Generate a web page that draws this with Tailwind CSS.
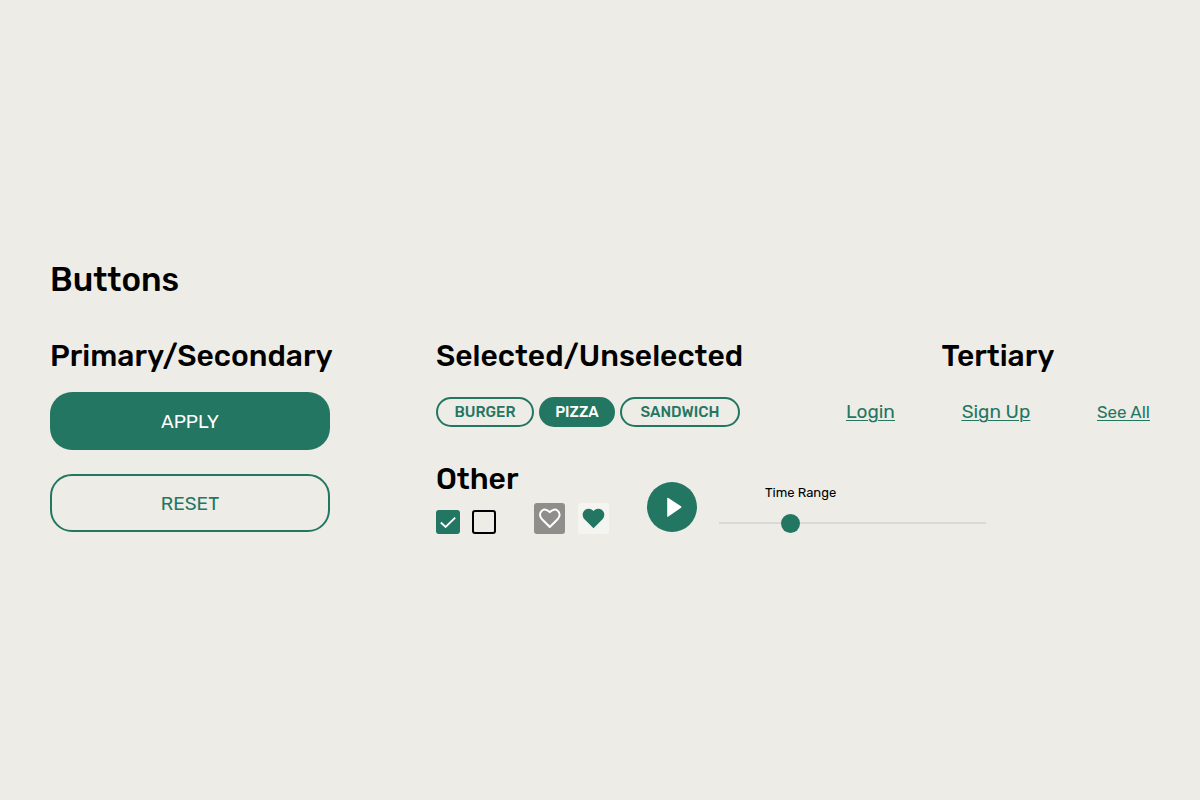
<!DOCTYPE html>
<html lang="en">
<head>
<meta charset="utf-8">
<meta name="viewport" content="width=device-width, initial-scale=1">
<title>Buttons</title>
<script src="https://cdn.jsdelivr.net/npm/@tailwindcss/browser@4"></script>
</head>
<body class="bg-[#edece6] font-[Rubik,Roboto,sans-serif] text-black">
<main class="flex min-h-screen flex-col justify-center px-[50px] pb-2">
  <h1 class="pt-0.5 text-[33px] leading-10 font-medium">Buttons</h1>
  <div class="mt-9 grid grid-cols-[280px_304px_304px] justify-between">
    <section class="row-span-2">
      <h2 class="text-[30px] leading-10 font-medium whitespace-nowrap">Primary/Secondary</h2>
      <div class="mt-4 flex flex-col gap-6">
        <button type="button" class="h-[58px] rounded-[22px] bg-[#237662] pt-0.5 text-[19px] text-white">APPLY</button>
        <button type="button" class="h-[58px] rounded-[22px] border-2 border-[#237662] pt-0.5 text-[19px] text-[#237662]">RESET</button>
      </div>
    </section>
    <section>
      <h2 class="text-[30px] leading-10 font-medium whitespace-nowrap">Selected/Unselected</h2>
      <div class="mt-[21px] flex gap-[5px] text-[15px] font-medium">
        <button type="button" aria-pressed="false" class="h-[30px] w-[98px] rounded-full border-2 border-[#237662] text-[#237662]">BURGER</button>
        <button type="button" aria-pressed="true" class="h-[30px] w-[76px] rounded-full bg-[#237662] text-white">PIZZA</button>
        <button type="button" aria-pressed="false" class="h-[30px] w-[120px] rounded-full border-2 border-[#237662] text-[#237662]">SANDWICH</button>
      </div>
    </section>
    <section>
      <h2 class="text-center text-[30px] leading-10 font-medium">Tertiary</h2>
      <div class="mt-6 flex items-baseline justify-between text-[19px] leading-6 text-[#237662] underline decoration-1 underline-offset-2">
        <a href="#login">Login</a>
        <a href="#signup">Sign Up</a>
        <a href="#all" class="text-[17px]">See All</a>
      </div>
    </section>
    <section class="col-span-2 col-start-2 mt-8 flex items-end">
      <div class="w-[173px]">
        <h2 class="text-[30px] leading-10 font-medium">Other</h2>
        <div class="mt-1 flex items-end">
          <label class="grid size-6">
            <input type="checkbox" checked aria-label="Selected option" class="peer col-start-1 row-start-1 size-6 appearance-none rounded-[3px] border-2 border-black checked:border-[#237662] checked:bg-[#237662]">
            <svg class="pointer-events-none invisible col-start-1 row-start-1 size-6 peer-checked:visible" viewBox="0 0 24 24" fill="none" stroke="white" stroke-width="1.8"><path d="M4.8 12.5 9.6 17 19.2 7.6"/></svg>
          </label>
          <label class="ml-3 grid size-6">
            <input type="checkbox" aria-label="Unselected option" class="peer col-start-1 row-start-1 size-6 appearance-none rounded-[3px] border-2 border-black checked:border-[#237662] checked:bg-[#237662]">
            <svg class="pointer-events-none invisible col-start-1 row-start-1 size-6 peer-checked:visible" viewBox="0 0 24 24" fill="none" stroke="white" stroke-width="1.8"><path d="M4.8 12.5 9.6 17 19.2 7.6"/></svg>
          </label>
          <button type="button" aria-label="Add to favourites" class="ml-[38px] size-[31px] rounded-[3px] bg-[#8f8e8a]">
            <svg class="size-[31px]" viewBox="0 0 31 31" fill="none" stroke="white" stroke-width="2" stroke-linejoin="round"><path d="M15.8 24 7.8 16C5.4 13.6 5.4 10 7.6 8 9.9 5.9 13.3 6.1 15.8 9.2 18.3 6.1 21.7 5.9 24 8 26.2 10 26.2 13.6 23.8 16Z"/></svg>
          </button>
          <button type="button" aria-label="Remove from favourites" class="ml-[13px] size-[31px] rounded-[2px] bg-[#f4f4f0]">
            <svg class="size-[31px]" viewBox="0 0 31 31" fill="#237662"><path d="M15.5 25.2 6.5 16.2C4 13.4 4.1 9.4 6.7 7.2 9.2 5 12.8 5.2 15.5 8 18.2 5.2 21.8 5 24.3 7.2 26.9 9.4 27 13.4 24.5 16.2Z"/></svg>
          </button>
        </div>
      </div>
      <button type="button" aria-label="Play" class="mb-0.5 ml-[38px] size-[50px] rounded-full bg-[#237662]">
        <svg class="size-[50px]" viewBox="0 0 50 50" fill="white"><path d="M20.2 16.6Q20.2 15.2 21.4 16L34 24.2Q35 25 34 25.8L21.4 34.6Q20.2 35.4 20.2 34Z"/></svg>
      </button>
      <div class="mb-0.5 ml-[22px] flex w-[267px] flex-col">
        <label for="time" class="ml-[46px] text-[13px] leading-5">Time Range</label>
        <input id="time" type="range" min="0" max="100" value="25" class="mt-[10px] h-[19px] w-full appearance-none bg-transparent [&::-webkit-slider-runnable-track]:h-0.5 [&::-webkit-slider-runnable-track]:bg-[#d9d9d9] [&::-webkit-slider-thumb]:-mt-2 [&::-webkit-slider-thumb]:size-[19px] [&::-webkit-slider-thumb]:appearance-none [&::-webkit-slider-thumb]:rounded-full [&::-webkit-slider-thumb]:bg-[#237662]">
      </div>
    </section>
  </div>
</main>
</body>
</html>
